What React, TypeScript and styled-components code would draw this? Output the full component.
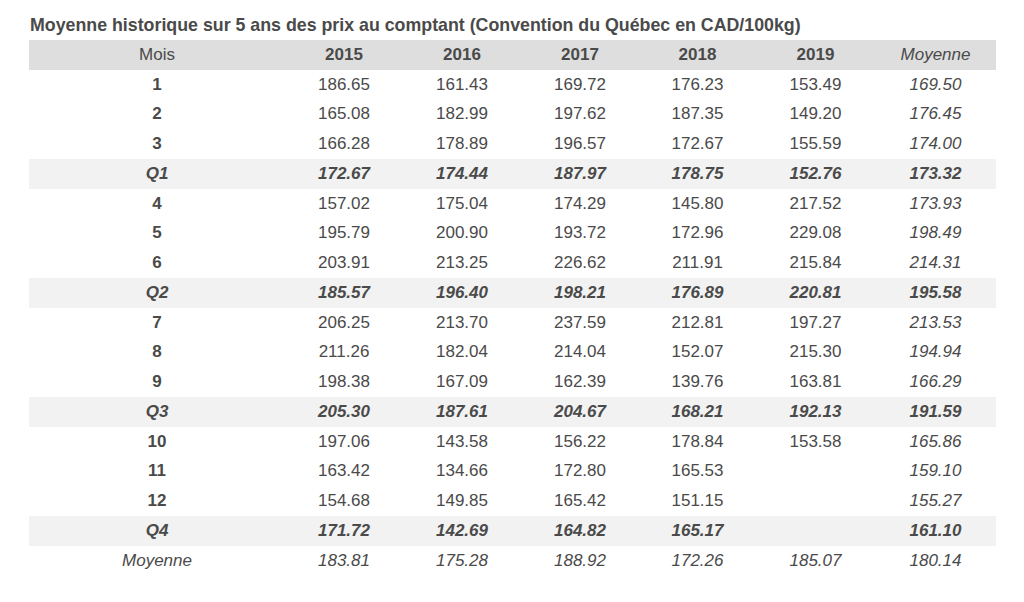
import styled, { createGlobalStyle } from "styled-components";

const GlobalStyle = createGlobalStyle`
  html, body {
    margin: 0;
    padding: 0;
    background: #fff;
  }
  body {
    font-family: "Liberation Sans", Arial, sans-serif;
    color: #4a4a4a;
  }
`;

const Page = styled.div`
  padding: 15px 29px 0 29px;
  width: 967px;
`;

const Title = styled.h1`
  margin: 0 0 0 1px;
  font-size: 17.8px;
  line-height: 20px;
  font-weight: bold;
  color: #4a4a4a;
  height: 25px;
  white-space: nowrap;
`;

const Table = styled.table`
  width: 967px;
  border-collapse: collapse;
  table-layout: fixed;
  font-size: 17px;
`;

const Col = styled.col<{ $w: number }>`
  width: ${(p) => p.$w}px;
`;

const Row = styled.tr<{ $shade?: "head" | "quarter" }>`
  height: 29.76px;
  background: ${(p) =>
    p.$shade === "head" ? "#dedede" : p.$shade === "quarter" ? "#f2f2f2" : "transparent"};
`;

const Cell = styled.td<{ $bold?: boolean; $italic?: boolean }>`
  padding: 0;
  text-align: center;
  vertical-align: middle;
  font-weight: ${(p) => (p.$bold ? "bold" : "normal")};
  font-style: ${(p) => (p.$italic ? "italic" : "normal")};
  color: #4a4a4a;
  white-space: nowrap;
`;

const colWidths = [256, 118, 118, 118, 117, 119, 121];
const years = ["2015", "2016", "2017", "2018", "2019"];

type Line = { label: string; values: string[]; avg: string; kind: "month" | "quarter" | "total" };

const lines: Line[] = [
  { label: "1", values: ["186.65", "161.43", "169.72", "176.23", "153.49"], avg: "169.50", kind: "month" },
  { label: "2", values: ["165.08", "182.99", "197.62", "187.35", "149.20"], avg: "176.45", kind: "month" },
  { label: "3", values: ["166.28", "178.89", "196.57", "172.67", "155.59"], avg: "174.00", kind: "month" },
  { label: "Q1", values: ["172.67", "174.44", "187.97", "178.75", "152.76"], avg: "173.32", kind: "quarter" },
  { label: "4", values: ["157.02", "175.04", "174.29", "145.80", "217.52"], avg: "173.93", kind: "month" },
  { label: "5", values: ["195.79", "200.90", "193.72", "172.96", "229.08"], avg: "198.49", kind: "month" },
  { label: "6", values: ["203.91", "213.25", "226.62", "211.91", "215.84"], avg: "214.31", kind: "month" },
  { label: "Q2", values: ["185.57", "196.40", "198.21", "176.89", "220.81"], avg: "195.58", kind: "quarter" },
  { label: "7", values: ["206.25", "213.70", "237.59", "212.81", "197.27"], avg: "213.53", kind: "month" },
  { label: "8", values: ["211.26", "182.04", "214.04", "152.07", "215.30"], avg: "194.94", kind: "month" },
  { label: "9", values: ["198.38", "167.09", "162.39", "139.76", "163.81"], avg: "166.29", kind: "month" },
  { label: "Q3", values: ["205.30", "187.61", "204.67", "168.21", "192.13"], avg: "191.59", kind: "quarter" },
  { label: "10", values: ["197.06", "143.58", "156.22", "178.84", "153.58"], avg: "165.86", kind: "month" },
  { label: "11", values: ["163.42", "134.66", "172.80", "165.53", ""], avg: "159.10", kind: "month" },
  { label: "12", values: ["154.68", "149.85", "165.42", "151.15", ""], avg: "155.27", kind: "month" },
  { label: "Q4", values: ["171.72", "142.69", "164.82", "165.17", ""], avg: "161.10", kind: "quarter" },
  { label: "Moyenne", values: ["183.81", "175.28", "188.92", "172.26", "185.07"], avg: "180.14", kind: "total" },
];

export default function App() {
  return (
    <>
      <GlobalStyle />
      <Page>
        <Title>Moyenne historique sur 5 ans des prix au comptant (Convention du Québec en CAD/100kg)</Title>
        <Table>
          <colgroup>
            {colWidths.map((w, i) => (
              <Col key={i} $w={w} />
            ))}
          </colgroup>
          <thead>
            <Row $shade="head">
              <Cell as="th">Mois</Cell>
              {years.map((y) => (
                <Cell as="th" key={y} $bold>
                  {y}
                </Cell>
              ))}
              <Cell as="th" $italic>
                Moyenne
              </Cell>
            </Row>
          </thead>
          <tbody>
            {lines.map((l) => {
              const q = l.kind === "quarter";
              const t = l.kind === "total";
              return (
                <Row key={l.label} $shade={q ? "quarter" : undefined}>
                  <Cell $bold={!t} $italic={q || t}>
                    {l.label}
                  </Cell>
                  {l.values.map((v, i) => (
                    <Cell key={i} $bold={q} $italic={q || t}>
                      {v}
                    </Cell>
                  ))}
                  <Cell $bold={q} $italic>
                    {l.avg}
                  </Cell>
                </Row>
              );
            })}
          </tbody>
        </Table>
      </Page>
    </>
  );
}
